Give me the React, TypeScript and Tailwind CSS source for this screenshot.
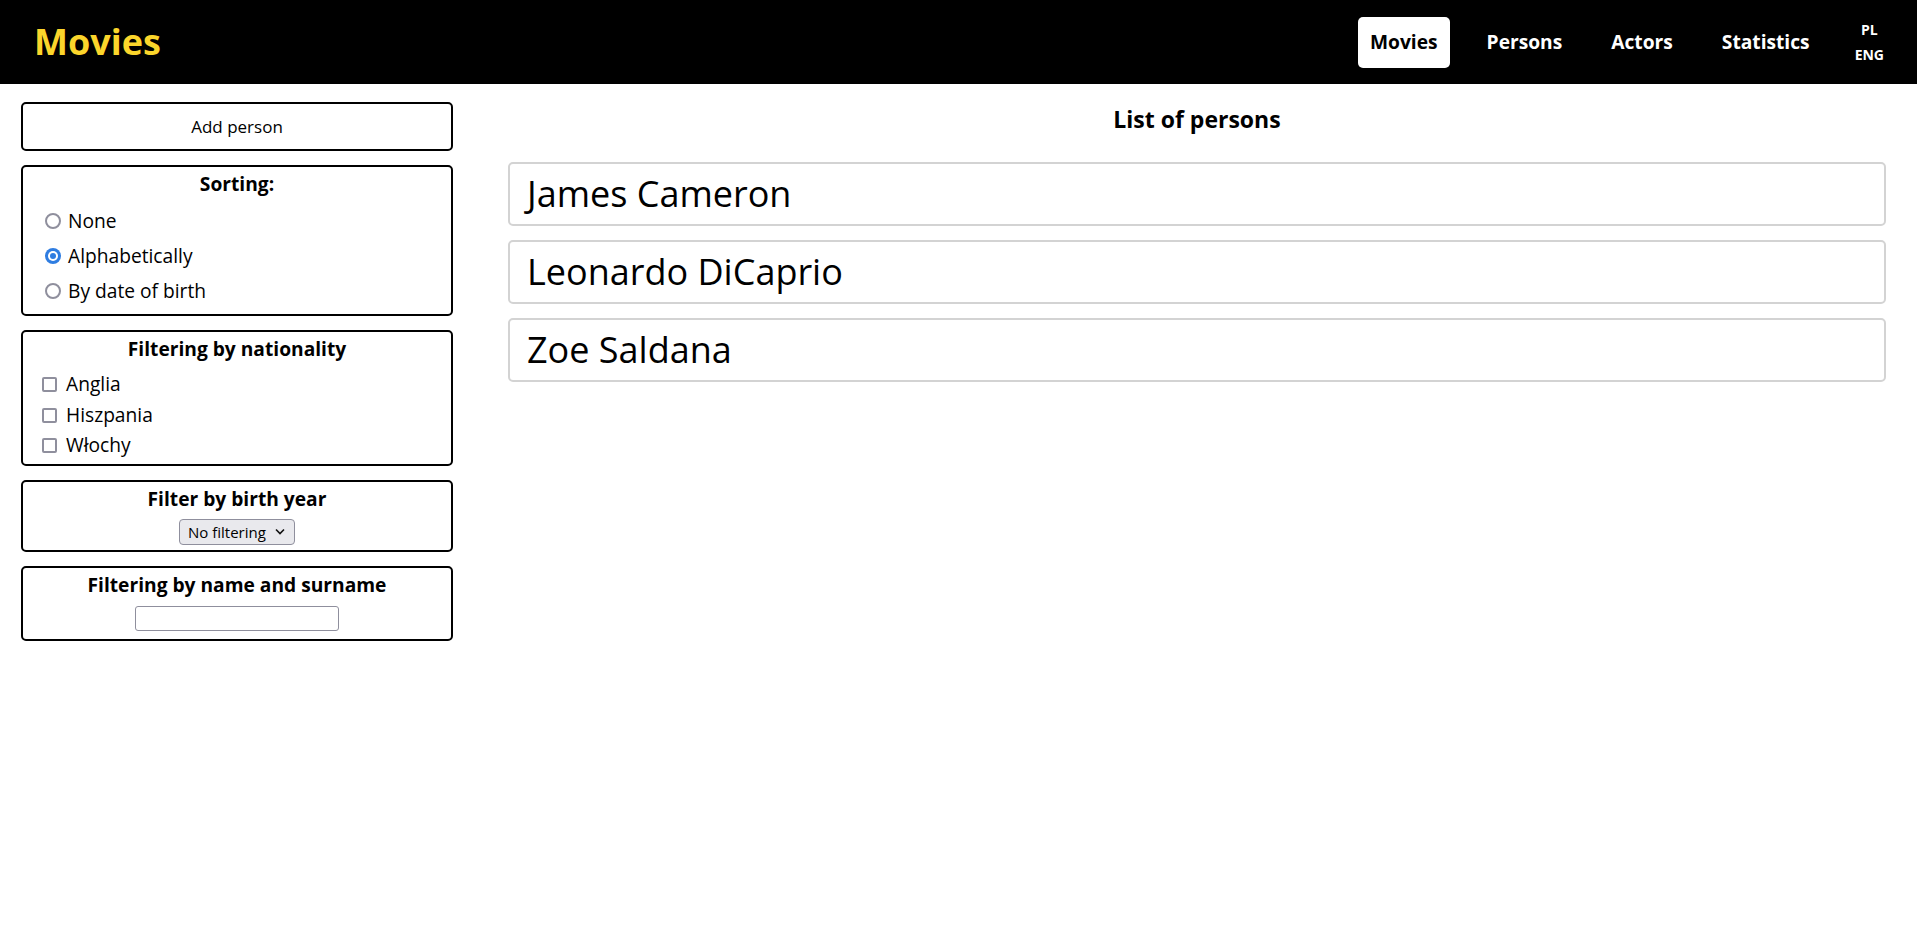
import React, { useState } from 'react';

const persons = ['James Cameron', 'Leonardo DiCaprio', 'Zoe Saldana'];
const sortOptions = ['None', 'Alphabetically', 'By date of birth'];
const countries = ['Anglia', 'Hiszpania', 'Włochy'];

function Radio({ checked }: { checked: boolean }) {
  return (
    <span
      className={
        'w-4 h-4 rounded-full flex items-center justify-center shrink-0 ' +
        (checked ? 'bg-[#2f7de1]' : 'border-2 border-[#8f8f9d] bg-white')
      }
    >
      {checked && (
        <span className="w-[10px] h-[10px] rounded-full bg-white flex items-center justify-center">
          <span className="w-[6px] h-[6px] rounded-full bg-[#2f7de1]" />
        </span>
      )}
    </span>
  );
}

function App() {
  const [sort, setSort] = useState('Alphabetically');
  const [checked, setChecked] = useState<string[]>([]);
  const [name, setName] = useState('');

  const toggle = (c: string) =>
    setChecked(checked.includes(c) ? checked.filter((x) => x !== c) : [...checked, c]);

  return (
    <div className="min-h-screen bg-white text-black" style={{ fontFamily: '"Open Sans", "Noto Sans", sans-serif' }}>
      {/* Header */}
      <header className="h-[84px] bg-black flex items-center justify-between pl-[34px] pr-[25px]">
        <h1 className="text-[36px] font-bold text-[#fbd52b] leading-none">Movies</h1>
        <nav className="flex items-center gap-[25px]">
          <a className="h-[51px] px-3 flex items-center rounded-[5px] bg-white text-black text-[19.2px] font-bold">Movies</a>
          <a className="h-[51px] px-3 flex items-center rounded-[5px] text-white text-[19.2px] font-bold">Persons</a>
          <a className="h-[51px] px-3 flex items-center rounded-[5px] text-white text-[19.2px] font-bold">Actors</a>
          <a className="h-[51px] px-3 flex items-center rounded-[5px] text-white text-[19.2px] font-bold">Statistics</a>
          <div className="flex flex-col items-center px-2 text-white text-[14px] font-bold leading-[25px]">
            <span>PL</span>
            <span>ENG</span>
          </div>
        </nav>
      </header>

      {/* Content */}
      <div className="flex gap-[55px] pl-[21px] pr-[31px] pt-[18px]">
        {/* Sidebar */}
        <aside className="w-[432px] shrink-0 flex flex-col gap-[14px]">
          <button className="h-[49px] border-2 border-black rounded-[5px] bg-white text-[17px]">Add person</button>

          <div className="border-2 border-black rounded-[5px] pt-[3px] pb-[5px] pl-[22px]">
            <h3 className="text-[19.2px] font-bold leading-[28.8px] text-center -ml-[22px]">Sorting:</h3>
            <div className="mt-[5px] flex flex-col">
              {sortOptions.map((o) => (
                <label key={o} className="h-[35px] flex items-center gap-[7px] text-[19.2px] cursor-pointer" onClick={() => setSort(o)}>
                  <Radio checked={sort === o} />
                  {o}
                </label>
              ))}
            </div>
          </div>

          <div className="border-2 border-black rounded-[5px] pt-[3px] pb-[3px] pl-[19px]">
            <h3 className="text-[19.2px] font-bold leading-[28.8px] text-center -ml-[19px]">Filtering by nationality</h3>
            <div className="mt-[6px] flex flex-col">
              {countries.map((c) => (
                <label key={c} className="h-[30.5px] flex items-center gap-[9px] text-[19.2px] cursor-pointer" onClick={() => toggle(c)}>
                  <span className="w-[15px] h-[15px] border-2 border-[#8f8f9d] rounded-[2px] bg-white shrink-0 flex items-center justify-center text-[11px] leading-none">
                    {checked.includes(c) ? '✓' : ''}
                  </span>
                  {c}
                </label>
              ))}
            </div>
          </div>

          <div className="border-2 border-black rounded-[5px] pt-[3px] pb-[5px] flex flex-col items-center">
            <h3 className="text-[19.2px] font-bold leading-[28.8px] text-center">Filter by birth year</h3>
            <div className="mt-[5px] h-[26px] w-[116px] border border-[#8f8f9d] rounded-[4px] bg-[#e9e9ed] flex items-center justify-between pl-[8px] pr-[9px] text-[15px]">
              <span>No filtering</span>
              <svg width="10" height="7" viewBox="0 0 10 7" fill="none" stroke="#111" strokeWidth="1.6">
                <path d="M1 1.5 L5 5.5 L9 1.5" />
              </svg>
            </div>
          </div>

          <div className="border-2 border-black rounded-[5px] pt-[3px] pb-[8px] flex flex-col items-center">
            <h3 className="text-[19.2px] font-bold leading-[28.8px] text-center">Filtering by name and surname</h3>
            <input
              value={name}
              onChange={(e) => setName(e.target.value)}
              className="mt-[6px] h-[25px] w-[204px] border border-[#8f8f9d] rounded-[3px] bg-white outline-none px-1 text-[15px]"
            />
          </div>
        </aside>

        {/* Main */}
        <main className="flex-1">
          <h2 className="text-[23px] font-bold leading-[34px] text-center">List of persons</h2>
          <div className="mt-[26px] flex flex-col gap-[14px]">
            {persons.map((p) => (
              <div key={p} className="h-[64px] border-2 border-[#d3d3d3] rounded-[5px] flex items-center pl-[17px] text-[36px]">
                {p}
              </div>
            ))}
          </div>
        </main>
      </div>
    </div>
  );
}

export default App;
